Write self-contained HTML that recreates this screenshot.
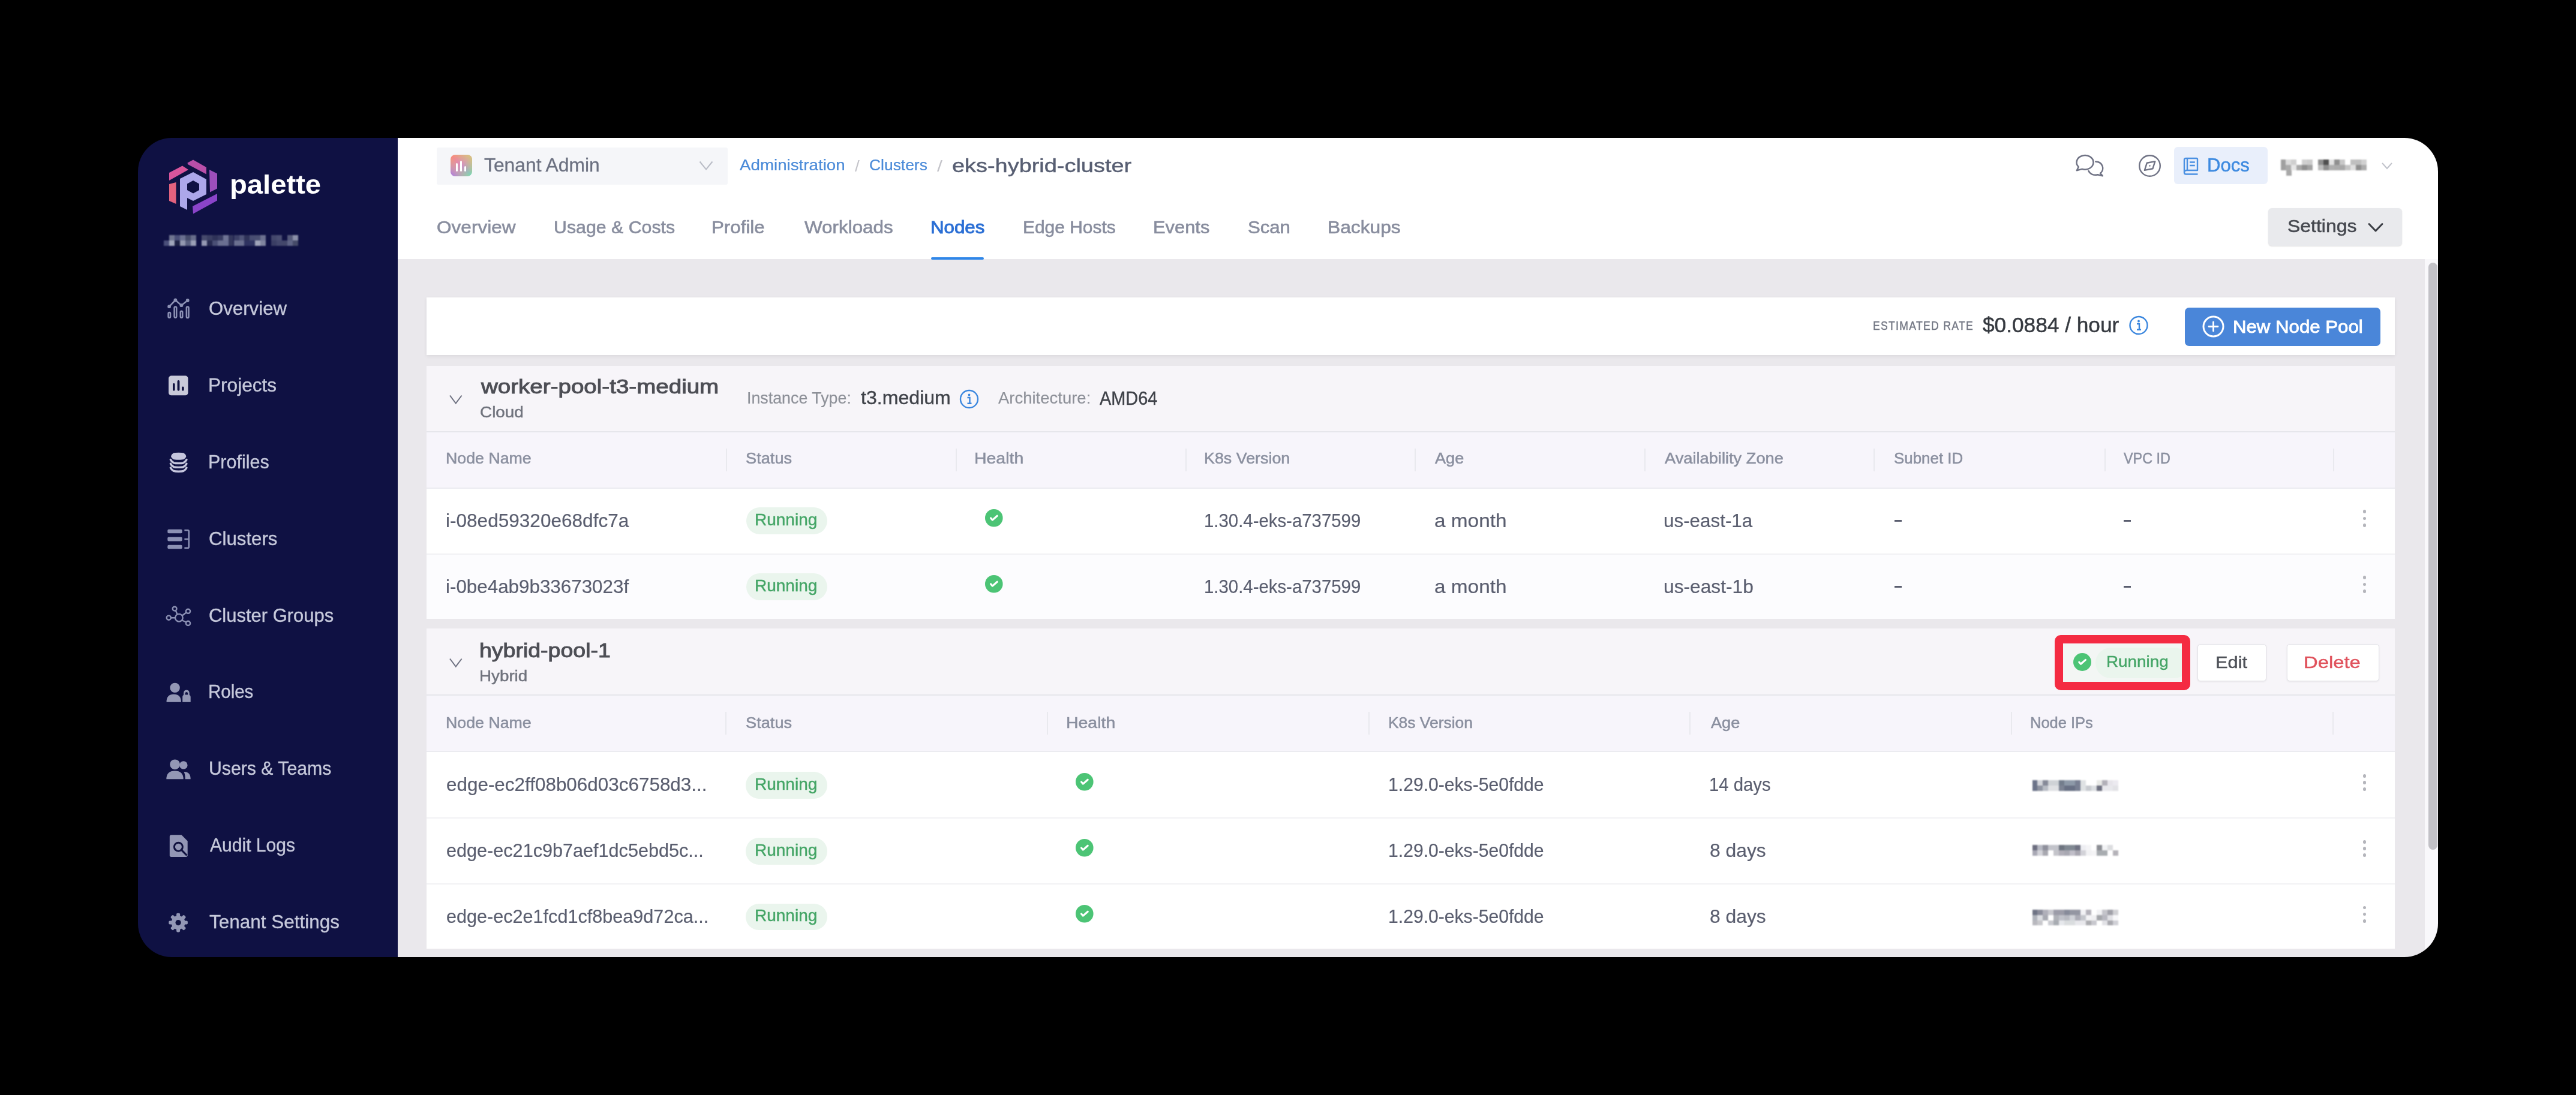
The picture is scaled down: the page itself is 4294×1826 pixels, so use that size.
<!DOCTYPE html>
<html><head><meta charset="utf-8"><style>
html,body{margin:0;padding:0;background:#000;width:4294px;height:1826px;overflow:hidden}
.win{position:absolute;left:230px;top:230px;width:3834px;height:1366px;border-radius:56px;overflow:hidden}
.in{position:absolute;left:-230px;top:-230px;width:4294px;height:1826px}
.in > div, .in > svg, .g > div{position:absolute}
.t{white-space:nowrap;line-height:1;font-family:"Liberation Sans",sans-serif;transform-origin:0 0}
</style></head><body>
<div class="win"><div class="in">
<div style="left:230px;top:230px;width:433px;height:1366px;background:#0f1143;"></div>
<div style="left:663px;top:230px;width:3401px;height:202px;background:#ffffff;"></div>
<div style="left:663px;top:432px;width:3379px;height:1164px;background:#eae8ec;"></div>
<div style="left:4042px;top:432px;width:22px;height:1164px;background:#f9f8fb;"></div>
<div style="left:4048px;top:438px;width:15px;height:979px;background:#c2c1c6;border-radius:8px"></div>
<svg style="left:270px;top:255px" width="100" height="110" viewBox="0 0 100 110">
<polygon fill="#d9559c" points="12,33 34,21.5 44,28 12,46"/>
<polygon fill="#b94fa9" points="42.5,16.5 52,11.5 74,24 74,35.5 43,19"/>
<polygon fill="#9d4fbb" points="79,28 92,34.5 92,59.5 80,65.5"/>
<polygon fill="#8a44c9" points="51,89 92,68 92,79.5 52,101.5"/>
<polygon fill="#e2627e" points="12,52 23.5,49 23.5,85 12,80"/>
<path fill="#aca7ea" fill-rule="evenodd" d="M30,43 L52,32 L74,44 L74,69 L52,80 L42,75 L42,95 L30,89 Z M52,46 L62,51.5 L62,62 L52,67.5 L42,62 L42,51.5 Z"/>
</svg>
<div class="g" style="left:0;top:0;width:4294px;height:1826px;filter:blur(0.9px)">
<div style="left:273.2px;top:401px;width:8.900000000000034px;height:9px;background:#4a4f7a;"></div>
<div style="left:282.1px;top:392px;width:9.0px;height:9px;background:#6f7590;"></div>
<div style="left:282.1px;top:401px;width:9.0px;height:9px;background:#a0a6bb;"></div>
<div style="left:291.1px;top:392px;width:8.899999999999977px;height:9px;background:#4a4f78;"></div>
<div style="left:291.1px;top:401px;width:8.899999999999977px;height:9px;background:#1e2245;"></div>
<div style="left:300.1px;top:392px;width:8.899999999999977px;height:9px;background:#6a7090;"></div>
<div style="left:300.1px;top:401px;width:8.899999999999977px;height:9px;background:#9398b0;"></div>
<div style="left:309.0px;top:392px;width:8.899999999999977px;height:9px;background:#454b6a;"></div>
<div style="left:309.0px;top:401px;width:8.899999999999977px;height:9px;background:#5a6080;"></div>
<div style="left:317.9px;top:392px;width:9.0px;height:9px;background:#676d8a;"></div>
<div style="left:317.9px;top:401px;width:9.0px;height:9px;background:#9a9fb5;"></div>
<div style="left:335.8px;top:392px;width:9.0px;height:9px;background:#464a6c;"></div>
<div style="left:335.8px;top:401px;width:9.0px;height:9px;background:#9498b2;"></div>
<div style="left:344.8px;top:392px;width:8.899999999999977px;height:9px;background:#3a3e62;"></div>
<div style="left:344.8px;top:401px;width:8.899999999999977px;height:9px;background:#262a50;"></div>
<div style="left:353.8px;top:392px;width:8.899999999999977px;height:9px;background:#2e3258;"></div>
<div style="left:353.8px;top:401px;width:8.899999999999977px;height:9px;background:#4a4f75;"></div>
<div style="left:362.7px;top:392px;width:8.900000000000034px;height:9px;background:#383c62;"></div>
<div style="left:362.7px;top:401px;width:8.900000000000034px;height:9px;background:#6a6f90;"></div>
<div style="left:371.6px;top:392px;width:9.0px;height:9px;background:#6e7394;"></div>
<div style="left:371.6px;top:401px;width:9.0px;height:9px;background:#6a6f92;"></div>
<div style="left:380.6px;top:392px;width:8.899999999999977px;height:9px;background:#33375c;"></div>
<div style="left:380.6px;top:401px;width:8.899999999999977px;height:9px;background:#33375c;"></div>
<div style="left:389.5px;top:392px;width:9.0px;height:9px;background:#3b3f66;"></div>
<div style="left:389.5px;top:401px;width:9.0px;height:9px;background:#6b7090;"></div>
<div style="left:398.5px;top:392px;width:8.899999999999977px;height:9px;background:#4f5478;"></div>
<div style="left:398.5px;top:401px;width:8.899999999999977px;height:9px;background:#6b7090;"></div>
<div style="left:407.4px;top:392px;width:9.0px;height:9px;background:#2e3258;"></div>
<div style="left:407.4px;top:401px;width:9.0px;height:9px;background:#2e3260;"></div>
<div style="left:416.4px;top:392px;width:8.900000000000034px;height:9px;background:#484d72;"></div>
<div style="left:416.4px;top:401px;width:8.900000000000034px;height:9px;background:#2f3462;"></div>
<div style="left:425.3px;top:392px;width:9.0px;height:9px;background:#4a4f72;"></div>
<div style="left:425.3px;top:401px;width:9.0px;height:9px;background:#a0a5ba;"></div>
<div style="left:434.3px;top:392px;width:8.899999999999977px;height:9px;background:#6c7190;"></div>
<div style="left:434.3px;top:401px;width:8.899999999999977px;height:9px;background:#80859f;"></div>
<div style="left:452.2px;top:392px;width:8.900000000000034px;height:9px;background:#43476c;"></div>
<div style="left:452.2px;top:401px;width:8.900000000000034px;height:9px;background:#3a3e64;"></div>
<div style="left:461.1px;top:392px;width:9.0px;height:9px;background:#4a4e72;"></div>
<div style="left:461.1px;top:401px;width:9.0px;height:9px;background:#43476c;"></div>
<div style="left:470.1px;top:401px;width:8.899999999999977px;height:9px;background:#43476a;"></div>
<div style="left:479.0px;top:392px;width:9.0px;height:9px;background:#555a7a;"></div>
<div style="left:479.0px;top:401px;width:9.0px;height:9px;background:#5f6485;"></div>
<div style="left:488.0px;top:392px;width:8.899999999999977px;height:9px;background:#8a8fa8;"></div>
<div style="left:488.0px;top:401px;width:8.899999999999977px;height:9px;background:#454a68;"></div>
</div>
<svg style="left:270px;top:490px" width="60" height="50" viewBox="0 0 60 50" fill="none" stroke="#8c91b4" stroke-width="2.6" stroke-linejoin="round" stroke-linecap="round">
<polyline points="12.1,21.2 22.4,10.5 32.4,19.2 42.7,11"/>
<circle cx="12.1" cy="21.2" r="1.6" fill="#8c91b4"/><circle cx="22.4" cy="10.5" r="1.6" fill="#8c91b4"/><circle cx="32.4" cy="19.2" r="1.6" fill="#8c91b4"/><circle cx="42.7" cy="11" r="1.6" fill="#8c91b4"/>
<rect x="10.6" y="31" width="3.4" height="8.6" rx="1.7"/><rect x="20.6" y="21.5" width="3.6" height="18.1" rx="1.8"/><rect x="30.8" y="28.8" width="3.4" height="10.8" rx="1.7"/><rect x="40.9" y="21.5" width="3.6" height="18.5" rx="1.8"/>
</svg>
<svg style="left:270px;top:615px" width="60" height="55" viewBox="0 0 60 55">
<rect x="11" y="11.6" width="32.5" height="32.6" rx="4.5" fill="#c9cad9"/>
<rect x="18" y="24" width="3.6" height="12.7" rx="1.8" fill="#10123f"/><rect x="25.6" y="19" width="3.8" height="17.7" rx="1.9" fill="#10123f"/><rect x="33" y="29.6" width="3.7" height="7.1" rx="1.8" fill="#10123f"/>
</svg>
<svg style="left:270px;top:745px" width="60" height="55" viewBox="0 0 60 55">
<path d="M15,15.8 Q15.5,13 19,10.6 Q21,9.8 27.6,9.8 Q34.2,9.8 36.4,10.6 Q40,13 40.4,15.8 Q40,18.6 36.4,20.9 Q34.2,21.7 27.6,21.7 Q21,21.7 19,20.9 Q15.5,18.6 15,15.8 Z" fill="#c5c6dd"/>
<path d="M14.3,21.5 Q16,25 19.5,26.8 Q22,27.6 27.6,27.6 Q33.4,27.6 35.8,26.8 Q39.3,25 41,21.5" fill="none" stroke="#c5c6dd" stroke-width="3.4" stroke-linecap="round"/>
<path d="M14.3,28.2 Q16,31.8 19.5,33.6 Q22,34.4 27.6,34.4 Q33.4,34.4 35.8,33.6 Q39.3,31.8 41,28.2" fill="none" stroke="#c5c6dd" stroke-width="3.4" stroke-linecap="round"/>
<path d="M14.3,35 Q16,38.6 19.5,40.4 Q22,41.2 27.6,41.2 Q33.4,41.2 35.8,40.4 Q39.3,38.6 41,35" fill="none" stroke="#c5c6dd" stroke-width="3.4" stroke-linecap="round"/>
</svg>
<svg style="left:270px;top:870px" width="60" height="55" viewBox="0 0 60 55">
<rect x="9.3" y="12.8" width="24.4" height="6.5" rx="2" fill="#8c91b4"/><rect x="9.3" y="25.6" width="24.4" height="6.8" rx="2" fill="#8c91b4"/><rect x="9.3" y="38.7" width="24.4" height="6.5" rx="2" fill="#8c91b4"/>
<path d="M37.4,14.2 L43,14.2 Q44.8,14.2 44.8,16 L44.8,42 Q44.8,43.8 43,43.8 L37.4,43.8 M37.4,29 L44.8,29" fill="none" stroke="#8c91b4" stroke-width="2.6"/>
</svg>
<svg style="left:270px;top:1000px" width="60" height="55" viewBox="0 0 60 55" fill="none" stroke="#8c91b4" stroke-width="2.4">
<circle cx="28.4" cy="30.2" r="6.3"/><circle cx="21.1" cy="15.1" r="3.4"/><circle cx="43.5" cy="19.3" r="3.6"/><circle cx="11.3" cy="30.2" r="3.6"/><circle cx="43.5" cy="39.4" r="3.6"/>
<path d="M23,18.5 L25.5,24.5 M40.3,21.5 L33.8,26.5 M14.9,30.2 L22.1,30.2 M33.5,34.5 L40.5,37.5"/>
</svg>
<svg style="left:270px;top:1125px" width="60" height="55" viewBox="0 0 60 55" fill="#9397b5">
<circle cx="21.6" cy="21.9" r="8.2"/>
<path d="M7.5,45.7 Q7.5,32.7 19.7,32.7 Q31.9,32.7 31.9,45.7 Z"/>
<path d="M34.2,45.7 L34.2,37 Q34.2,34.5 36,34 L36,32 Q36,25.6 40.9,25.6 Q45.8,25.6 45.8,32 L45.8,34 Q47.7,34.5 47.7,37 L47.7,45.7 Z M38.6,33.5 L43.2,33.5 L43.2,31.5 Q43.2,29 40.9,29 Q38.6,29 38.6,31.5 Z" fill-rule="evenodd"/>
</svg>
<svg style="left:270px;top:1255px" width="60" height="55" viewBox="0 0 60 55" fill="#9397b5">
<circle cx="21.6" cy="19.8" r="8.4"/><circle cx="35.9" cy="20.9" r="6.7"/>
<path d="M7.3,44.2 Q7.3,30.4 21.5,30.4 Q35.7,30.4 35.7,44.2 Z"/>
<path d="M37.5,44.2 L47.7,44.2 Q47.7,32 36.5,32 Q38.8,36 38.8,44.2 Z"/>
</svg>
<svg style="left:270px;top:1380px" width="60" height="55" viewBox="0 0 60 55">
<path d="M15.5,12.3 L32.5,12.3 L42.7,22.5 L42.7,46.3 Q42.7,49 40,49 L15.5,49 Q12.8,49 12.8,46.3 L12.8,15 Q12.8,12.3 15.5,12.3 Z" fill="#9397b5"/>
<circle cx="27.4" cy="32.2" r="7" fill="none" stroke="#10123f" stroke-width="3"/>
<path d="M32.5,37.3 L41.5,46.5" stroke="#10123f" stroke-width="3.2"/>
</svg>
<svg style="left:270px;top:1510px" width="60" height="55" viewBox="0 0 60 55">
<g transform="translate(27.1,28.6)" fill="#9397b5">
<circle r="11.5"/>
<rect x="-3" y="-15.8" width="6" height="7" rx="1.8" transform="rotate(0)"/><rect x="-3" y="-15.8" width="6" height="7" rx="1.8" transform="rotate(45)"/><rect x="-3" y="-15.8" width="6" height="7" rx="1.8" transform="rotate(90)"/><rect x="-3" y="-15.8" width="6" height="7" rx="1.8" transform="rotate(135)"/><rect x="-3" y="-15.8" width="6" height="7" rx="1.8" transform="rotate(180)"/><rect x="-3" y="-15.8" width="6" height="7" rx="1.8" transform="rotate(225)"/><rect x="-3" y="-15.8" width="6" height="7" rx="1.8" transform="rotate(270)"/><rect x="-3" y="-15.8" width="6" height="7" rx="1.8" transform="rotate(315)"/>
<circle r="4.6" fill="#10123f"/>
</g></svg>
<div style="left:728px;top:246px;width:485px;height:62px;background:#f5f6f9;border-radius:3px"></div>
<svg style="left:751px;top:258px" width="37" height="37" viewBox="0 0 37 37">
<defs><linearGradient id="g1" x1="0" y1="0" x2="1" y2="1"><stop offset="0" stop-color="#ff8a72"/><stop offset="0.5" stop-color="#d58cc8"/><stop offset="1" stop-color="#6fe0b0"/></linearGradient>
<linearGradient id="g2" x1="1" y1="0" x2="0" y2="1"><stop offset="0" stop-color="#d9d36a" stop-opacity="0.9"/><stop offset="0.5" stop-color="#d9d36a" stop-opacity="0"/><stop offset="1" stop-color="#a070f0" stop-opacity="0.9"/></linearGradient></defs>
<rect x="0" y="0" width="36" height="36" rx="8" fill="url(#g1)"/><rect x="0" y="0" width="36" height="36" rx="8" fill="url(#g2)"/>
<rect x="9" y="14" width="3" height="14" rx="1.5" fill="#fff"/><rect x="16" y="10" width="3" height="18" rx="1.5" fill="#fff"/><rect x="23" y="19" width="3" height="9" rx="1.5" fill="#fff"/>
</svg>
<svg style="left:1164px;top:266px" width="26" height="20" viewBox="0 0 26 20"><polyline points="2.5,3.5 13,16.5 23.5,3.5" fill="none" stroke="#b9bcc6" stroke-width="2"/></svg>
<svg style="left:3450px;top:245px" width="70" height="60" viewBox="0 0 70 60" fill="none" stroke="#6f7284" stroke-width="2.5" stroke-linejoin="round" stroke-linecap="round">
<path d="M20.7,36.9 A14 11.8 0 1 0 14.8,33.4 L11.8,39.2 Z"/>
<path d="M43.3,24.6 A12 11 0 0 1 51,44 L54.8,48.2 L46.4,46.2 A12 11 0 0 1 31.5,40"/>
</svg>
<svg style="left:3555px;top:245px" width="60" height="60" viewBox="0 0 60 60" fill="none" stroke="#6f7284" stroke-width="2.4" stroke-linejoin="round">
<circle cx="28.5" cy="31.5" r="17.3"/>
<path d="M37.3,24.1 L33.4,36.3 L19.9,38.9 L23.8,26.7 Z"/>
<circle cx="28.5" cy="31.5" r="1.2" fill="#6f7284" stroke="none"/>
</svg>
<div style="left:3624px;top:245px;width:156px;height:62px;background:#e9effb;border-radius:6px"></div>
<svg style="left:3630px;top:255px" width="45" height="45" viewBox="0 0 45 45" fill="none" stroke="#4a90e2" stroke-width="2.4" stroke-linejoin="round">
<path d="M11,33 L11,11.5 Q11,9 13.5,9 L31.5,9 Q33,9 33,10.5 L33,29 L15,29 Q11,29 11,33 Q11,35.5 14,35.5 L33.5,35.5"/>
<path d="M16,9.5 L16,28.5"/>
<path d="M20,15.5 L28.8,15.5 M20,21 L28.8,21"/>
</svg>
<div class="g" style="left:0;top:0;width:4294px;height:1826px;filter:blur(0.9px)">
<div style="left:3801.5px;top:266px;width:8.900000000000091px;height:9px;background:#a0a0a0;"></div>
<div style="left:3801.5px;top:275px;width:8.900000000000091px;height:9px;background:#a0a0a0;"></div>
<div style="left:3810.4px;top:266px;width:9.0px;height:9px;background:#dcdcdc;"></div>
<div style="left:3810.4px;top:275px;width:9.0px;height:9px;background:#ababab;"></div>
<div style="left:3819.4px;top:266px;width:8.900000000000091px;height:9px;background:#cfcfcf;"></div>
<div style="left:3819.4px;top:275px;width:8.900000000000091px;height:9px;background:#e6e6e6;"></div>
<div style="left:3828.3px;top:275px;width:9.0px;height:9px;background:#a8a8a8;"></div>
<div style="left:3837.3px;top:266px;width:8.899999999999636px;height:9px;background:#d0d0d0;"></div>
<div style="left:3837.3px;top:275px;width:8.899999999999636px;height:9px;background:#8f8f8f;"></div>
<div style="left:3846.2px;top:266px;width:9.0px;height:9px;background:#cccccc;"></div>
<div style="left:3846.2px;top:275px;width:9.0px;height:9px;background:#a2a2a2;"></div>
<div style="left:3864.2px;top:266px;width:8.900000000000091px;height:9px;background:#8e8e8e;"></div>
<div style="left:3864.2px;top:275px;width:8.900000000000091px;height:9px;background:#bdbdbd;"></div>
<div style="left:3873.1px;top:266px;width:8.900000000000091px;height:9px;background:#4f4f4f;"></div>
<div style="left:3873.1px;top:275px;width:8.900000000000091px;height:9px;background:#8e8e8e;"></div>
<div style="left:3882.1px;top:266px;width:8.900000000000091px;height:9px;background:#e2e2e2;"></div>
<div style="left:3882.1px;top:275px;width:8.900000000000091px;height:9px;background:#aeaeae;"></div>
<div style="left:3891.0px;top:266px;width:8.900000000000091px;height:9px;background:#8f8f8f;"></div>
<div style="left:3891.0px;top:275px;width:8.900000000000091px;height:9px;background:#ababab;"></div>
<div style="left:3899.9px;top:266px;width:9.0px;height:9px;background:#c8c8c8;"></div>
<div style="left:3899.9px;top:275px;width:9.0px;height:9px;background:#a8a8a8;"></div>
<div style="left:3908.9px;top:275px;width:8.900000000000091px;height:9px;background:#c4c4c4;"></div>
<div style="left:3917.8px;top:266px;width:9.0px;height:9px;background:#c0c0c0;"></div>
<div style="left:3917.8px;top:275px;width:9.0px;height:9px;background:#e0e0e0;"></div>
<div style="left:3926.8px;top:266px;width:9.0px;height:9px;background:#bfbfbf;"></div>
<div style="left:3926.8px;top:275px;width:9.0px;height:9px;background:#8f8f8f;"></div>
<div style="left:3935.8px;top:266px;width:8.899999999999636px;height:9px;background:#d0d0d0;"></div>
<div style="left:3935.8px;top:275px;width:8.899999999999636px;height:9px;background:#acacac;"></div>
<div style="left:3810.5px;top:284px;width:9.0px;height:9px;background:#a8a8a8;"></div>
</div>
<svg style="left:3968px;top:268px" width="22" height="18" viewBox="0 0 22 18"><polyline points="3,4 11,13 19,4" fill="none" stroke="#c0c2ca" stroke-width="2"/></svg>
<div style="left:1551.5px;top:429px;width:88.09999999999991px;height:4px;background:#2f86e8;border-radius:2px"></div>
<div style="left:3781px;top:347px;width:223px;height:63px;background:#e9eaed;border-radius:6px;box-shadow:0 1px 2px rgba(0,0,0,0.12)"></div>
<svg style="left:3944px;top:368px" width="32" height="24" viewBox="0 0 32 24"><polyline points="5,5.5 16,17 27,5.5" fill="none" stroke="#3a3d44" stroke-width="3" stroke-linecap="round" stroke-linejoin="round"/></svg>
<div style="left:711px;top:496px;width:3281px;height:95.5px;background:#ffffff;box-shadow:0 2px 6px rgba(0,0,0,0.07)"></div>
<svg style="left:3545px;top:523px" width="40" height="40" viewBox="0 0 40 40"><circle cx="20" cy="19.5" r="14.5" fill="none" stroke="#3a86de" stroke-width="2.4"/>
<circle cx="20" cy="12.5" r="1.9" fill="#3a86de"/><path d="M17,17 L21,17 L21,26.5 M17,26.8 L24,26.8" fill="none" stroke="#3a86de" stroke-width="2.4"/></svg>
<div style="left:3641.6px;top:512.7px;width:326.0px;height:63.89999999999998px;background:#4a86d9;border-radius:7px"></div>
<svg style="left:3665px;top:520px" width="50" height="50" viewBox="0 0 50 50"><circle cx="24.5" cy="24.5" r="16.5" fill="none" stroke="#fff" stroke-width="3"/>
<path d="M24.5,17 L24.5,32 M17,24.5 L32,24.5" stroke="#fff" stroke-width="2.8" stroke-linecap="round"/></svg>
<div style="left:711px;top:610px;width:3281px;height:422px;background:#ffffff;"></div>
<div style="left:711px;top:610px;width:3281px;height:109px;background:#f7f5f9;"></div>
<div style="left:711px;top:719px;width:3281px;height:2px;background:#e6e6eb;"></div>
<div style="left:711px;top:721px;width:3281px;height:93px;background:#f7f5fb;"></div>
<div style="left:711px;top:813px;width:3281px;height:2px;background:#ebebf0;"></div>
<div style="left:711px;top:925px;width:3281px;height:107px;background:#fcfcfe;"></div>
<div style="left:711px;top:923px;width:3281px;height:2px;background:#f1f1f4;"></div>
<div style="left:1209.5px;top:748px;width:2.0px;height:38px;background:#e9e9ee;"></div>
<div style="left:1592.5px;top:748px;width:2.0px;height:38px;background:#e9e9ee;"></div>
<div style="left:1975.5px;top:748px;width:2.0px;height:38px;background:#e9e9ee;"></div>
<div style="left:2357.5px;top:748px;width:2.0px;height:38px;background:#e9e9ee;"></div>
<div style="left:2740.5px;top:748px;width:2.0px;height:38px;background:#e9e9ee;"></div>
<div style="left:3122.5px;top:748px;width:2.0px;height:38px;background:#e9e9ee;"></div>
<div style="left:3507.5px;top:748px;width:2.0px;height:38px;background:#e9e9ee;"></div>
<div style="left:3888.5px;top:748px;width:2.0px;height:38px;background:#e9e9ee;"></div>
<svg style="left:745px;top:650px" width="30" height="30" viewBox="0 0 30 30"><polyline points="5,9.5 14.8,22.5 24.6,9.5" fill="none" stroke="#6d7080" stroke-width="2"/></svg>
<svg style="left:1596px;top:646px" width="40" height="40" viewBox="0 0 40 40"><circle cx="19.5" cy="19.5" r="14.5" fill="none" stroke="#3a86de" stroke-width="2.4"/>
<circle cx="19.5" cy="12.5" r="1.9" fill="#3a86de"/><path d="M16.5,17 L20.5,17 L20.5,26.5 M16.5,26.8 L23.5,26.8" fill="none" stroke="#3a86de" stroke-width="2.4"/></svg>
<div style="left:1243.6px;top:846px;width:135.10000000000014px;height:45px;background:#eaf5ed;border-radius:22.5px"></div>
<svg style="left:1640.6000000000001px;top:848.2px" width="31.6" height="31.6" viewBox="-15.8 -15.8 31.6 31.6"><circle r="14.8" fill="#4cc475"/>
<polyline points="-5.2,0.2 -2.4,3.3 5.4,-3.6" fill="none" stroke="#fff" stroke-width="3.2" stroke-linecap="round" stroke-linejoin="round"/></svg>
<div style="left:3158px;top:867px;width:12px;height:2.5px;background:#5a5e6f;"></div>
<div style="left:3540px;top:867px;width:12px;height:2.5px;background:#5a5e6f;"></div>
<div style="left:3938.5px;top:850.4px;width:5.800000000000182px;height:5.7999999999999545px;background:#b5b6bc;border-radius:50%"></div>
<div style="left:3938.5px;top:861.6px;width:5.800000000000182px;height:5.7999999999999545px;background:#b5b6bc;border-radius:50%"></div>
<div style="left:3938.5px;top:872.8000000000001px;width:5.800000000000182px;height:5.7999999999999545px;background:#b5b6bc;border-radius:50%"></div>
<div style="left:1243.6px;top:956px;width:135.10000000000014px;height:45px;background:#eaf5ed;border-radius:22.5px"></div>
<svg style="left:1640.6000000000001px;top:958.2px" width="31.6" height="31.6" viewBox="-15.8 -15.8 31.6 31.6"><circle r="14.8" fill="#4cc475"/>
<polyline points="-5.2,0.2 -2.4,3.3 5.4,-3.6" fill="none" stroke="#fff" stroke-width="3.2" stroke-linecap="round" stroke-linejoin="round"/></svg>
<div style="left:3158px;top:977px;width:12px;height:2.5px;background:#5a5e6f;"></div>
<div style="left:3540px;top:977px;width:12px;height:2.5px;background:#5a5e6f;"></div>
<div style="left:3938.5px;top:960.4px;width:5.800000000000182px;height:5.7999999999999545px;background:#b5b6bc;border-radius:50%"></div>
<div style="left:3938.5px;top:971.6px;width:5.800000000000182px;height:5.7999999999999545px;background:#b5b6bc;border-radius:50%"></div>
<div style="left:3938.5px;top:982.8000000000001px;width:5.800000000000182px;height:5.7999999999999545px;background:#b5b6bc;border-radius:50%"></div>
<div style="left:711px;top:1048px;width:3281px;height:534px;background:#ffffff;"></div>
<div style="left:711px;top:1048px;width:3281px;height:110px;background:#f7f5f9;"></div>
<div style="left:711px;top:1158px;width:3281px;height:2px;background:#e6e6eb;"></div>
<div style="left:711px;top:1160px;width:3281px;height:93px;background:#f7f5fb;"></div>
<div style="left:711px;top:1252px;width:3281px;height:2px;background:#ebebf0;"></div>
<div style="left:1209.0px;top:1187px;width:2.0px;height:38px;background:#e9e9ee;"></div>
<div style="left:1745.2px;top:1187px;width:2.0px;height:38px;background:#e9e9ee;"></div>
<div style="left:2280.5px;top:1187px;width:2.0px;height:38px;background:#e9e9ee;"></div>
<div style="left:2816.0px;top:1187px;width:2.0px;height:38px;background:#e9e9ee;"></div>
<div style="left:3352.3px;top:1187px;width:2.0px;height:38px;background:#e9e9ee;"></div>
<div style="left:3888.1px;top:1187px;width:2.0px;height:38px;background:#e9e9ee;"></div>
<svg style="left:745px;top:1089px" width="30" height="30" viewBox="0 0 30 30"><polyline points="5,9.5 14.8,22.5 24.6,9.5" fill="none" stroke="#6d7080" stroke-width="2"/></svg>
<div style="left:3439px;top:1074px;width:198px;height:63px;background:#f3f6f4;"></div>
<div style="left:3493px;top:1080px;width:157px;height:51px;background:#eaf5ed;border-radius:26px"></div>
<div style="left:3424.5px;top:1059px;width:226.5px;height:92.3px;box-sizing:border-box;border:14.7px solid #f42b42;border-radius:10px"></div>
<svg style="left:3454.5px;top:1088px" width="32" height="32" viewBox="-16 -16 32 32"><circle r="15" fill="#4cc475"/>
<polyline points="-5.2,0.2 -2.4,3.3 5.4,-3.6" fill="none" stroke="#fff" stroke-width="3.2" stroke-linecap="round" stroke-linejoin="round"/></svg>
<div style="left:3663px;top:1074px;width:115px;height:61.5px;background:#ffffff;border:1.5px solid #e3e3e8;border-radius:5px;box-sizing:border-box;box-shadow:0 1px 3px rgba(0,0,0,0.08)"></div>
<div style="left:3812.3px;top:1074px;width:153.69999999999982px;height:61.5px;background:#ffffff;border:1.5px solid #e3e3e8;border-radius:5px;box-sizing:border-box;box-shadow:0 1px 3px rgba(0,0,0,0.08)"></div>
<div style="left:1243.4px;top:1287px;width:136.0999999999999px;height:44.5px;background:#eaf5ed;border-radius:22.25px"></div>
<svg style="left:1792.2px;top:1288.2px" width="31.6" height="31.6" viewBox="-15.8 -15.8 31.6 31.6"><circle r="14.8" fill="#4cc475"/>
<polyline points="-5.2,0.2 -2.4,3.3 5.4,-3.6" fill="none" stroke="#fff" stroke-width="3.2" stroke-linecap="round" stroke-linejoin="round"/></svg>
<div style="left:3938.5px;top:1290.8999999999999px;width:5.800000000000182px;height:5.800000000000182px;background:#b5b6bc;border-radius:50%"></div>
<div style="left:3938.5px;top:1302.1px;width:5.800000000000182px;height:5.800000000000182px;background:#b5b6bc;border-radius:50%"></div>
<div style="left:3938.5px;top:1313.3px;width:5.800000000000182px;height:5.800000000000182px;background:#b5b6bc;border-radius:50%"></div>
<div style="left:711px;top:1363px;width:3281px;height:2px;background:#f1f1f4;"></div>
<div style="left:1243.4px;top:1397px;width:136.0999999999999px;height:44.5px;background:#eaf5ed;border-radius:22.25px"></div>
<svg style="left:1792.2px;top:1398.2px" width="31.6" height="31.6" viewBox="-15.8 -15.8 31.6 31.6"><circle r="14.8" fill="#4cc475"/>
<polyline points="-5.2,0.2 -2.4,3.3 5.4,-3.6" fill="none" stroke="#fff" stroke-width="3.2" stroke-linecap="round" stroke-linejoin="round"/></svg>
<div style="left:3938.5px;top:1400.8999999999999px;width:5.800000000000182px;height:5.800000000000182px;background:#b5b6bc;border-radius:50%"></div>
<div style="left:3938.5px;top:1412.1px;width:5.800000000000182px;height:5.800000000000182px;background:#b5b6bc;border-radius:50%"></div>
<div style="left:3938.5px;top:1423.3px;width:5.800000000000182px;height:5.800000000000182px;background:#b5b6bc;border-radius:50%"></div>
<div style="left:711px;top:1472.6px;width:3281px;height:2.0px;background:#f1f1f4;"></div>
<div style="left:1243.4px;top:1506.6px;width:136.0999999999999px;height:44.5px;background:#eaf5ed;border-radius:22.25px"></div>
<svg style="left:1792.2px;top:1507.8px" width="31.6" height="31.6" viewBox="-15.8 -15.8 31.6 31.6"><circle r="14.8" fill="#4cc475"/>
<polyline points="-5.2,0.2 -2.4,3.3 5.4,-3.6" fill="none" stroke="#fff" stroke-width="3.2" stroke-linecap="round" stroke-linejoin="round"/></svg>
<div style="left:3938.5px;top:1510.4999999999998px;width:5.800000000000182px;height:5.800000000000182px;background:#b5b6bc;border-radius:50%"></div>
<div style="left:3938.5px;top:1521.6999999999998px;width:5.800000000000182px;height:5.800000000000182px;background:#b5b6bc;border-radius:50%"></div>
<div style="left:3938.5px;top:1532.8999999999999px;width:5.800000000000182px;height:5.800000000000182px;background:#b5b6bc;border-radius:50%"></div>
<div class="g" style="left:0;top:0;width:4294px;height:1826px;filter:blur(0.9px)">
<div style="left:3387.5px;top:1301.0px;width:8.900000000000091px;height:8.799999999999955px;background:#6b7388;"></div>
<div style="left:3396.4px;top:1301.0px;width:9.0px;height:8.799999999999955px;background:#d3d5da;"></div>
<div style="left:3405.4px;top:1301.0px;width:8.900000000000091px;height:8.799999999999955px;background:#868a98;"></div>
<div style="left:3414.3px;top:1301.0px;width:9.0px;height:8.799999999999955px;background:#cfd2d6;"></div>
<div style="left:3423.3px;top:1301.0px;width:8.899999999999636px;height:8.799999999999955px;background:#cfd2d6;"></div>
<div style="left:3432.2px;top:1301.0px;width:9.0px;height:8.799999999999955px;background:#737d8c;"></div>
<div style="left:3441.2px;top:1301.0px;width:8.900000000000091px;height:8.799999999999955px;background:#8d99a8;"></div>
<div style="left:3450.2px;top:1301.0px;width:8.900000000000091px;height:8.799999999999955px;background:#8d99a8;"></div>
<div style="left:3459.1px;top:1301.0px;width:8.900000000000091px;height:8.799999999999955px;background:#787f92;"></div>
<div style="left:3468.1px;top:1301.0px;width:8.900000000000091px;height:8.799999999999955px;background:#dfe2e4;"></div>
<div style="left:3494.9px;top:1301.0px;width:8.900000000000091px;height:8.799999999999955px;background:#e8e9e6;"></div>
<div style="left:3503.8px;top:1301.0px;width:9.0px;height:8.799999999999955px;background:#b2b0b8;"></div>
<div style="left:3512.8px;top:1301.0px;width:9.0px;height:8.799999999999955px;background:#e6e4ea;"></div>
<div style="left:3521.8px;top:1301.0px;width:8.899999999999636px;height:8.799999999999955px;background:#eceaf0;"></div>
<div style="left:3387.5px;top:1309.8px;width:8.900000000000091px;height:8.799999999999955px;background:#6b7388;"></div>
<div style="left:3396.4px;top:1309.8px;width:9.0px;height:8.799999999999955px;background:#8e93a0;"></div>
<div style="left:3405.4px;top:1309.8px;width:8.900000000000091px;height:8.799999999999955px;background:#b8bcc4;"></div>
<div style="left:3414.3px;top:1309.8px;width:9.0px;height:8.799999999999955px;background:#e0e1e4;"></div>
<div style="left:3423.3px;top:1309.8px;width:8.899999999999636px;height:8.799999999999955px;background:#e0e1e4;"></div>
<div style="left:3432.2px;top:1309.8px;width:9.0px;height:8.799999999999955px;background:#7d8494;"></div>
<div style="left:3441.2px;top:1309.8px;width:8.900000000000091px;height:8.799999999999955px;background:#687084;"></div>
<div style="left:3450.2px;top:1309.8px;width:8.900000000000091px;height:8.799999999999955px;background:#687084;"></div>
<div style="left:3459.1px;top:1309.8px;width:8.900000000000091px;height:8.799999999999955px;background:#787f92;"></div>
<div style="left:3468.1px;top:1309.8px;width:8.900000000000091px;height:8.799999999999955px;background:#dfe2e4;"></div>
<div style="left:3477.0px;top:1309.8px;width:8.900000000000091px;height:8.799999999999955px;background:#c8cbd0;"></div>
<div style="left:3485.9px;top:1309.8px;width:9.0px;height:8.799999999999955px;background:#dcdfe2;"></div>
<div style="left:3494.9px;top:1309.8px;width:8.900000000000091px;height:8.799999999999955px;background:#6e7080;"></div>
<div style="left:3503.8px;top:1309.8px;width:9.0px;height:8.799999999999955px;background:#e8e8ec;"></div>
<div style="left:3512.8px;top:1309.8px;width:9.0px;height:8.799999999999955px;background:#e8e8ec;"></div>
<div style="left:3521.8px;top:1309.8px;width:8.899999999999636px;height:8.799999999999955px;background:#e2e2e6;"></div>
<div style="left:3387.5px;top:1409.3px;width:8.900000000000091px;height:8.799999999999955px;background:#6c6e80;"></div>
<div style="left:3396.4px;top:1409.3px;width:9.0px;height:8.799999999999955px;background:#b6b8c2;"></div>
<div style="left:3405.4px;top:1409.3px;width:8.900000000000091px;height:8.799999999999955px;background:#8f909c;"></div>
<div style="left:3414.3px;top:1409.3px;width:9.0px;height:8.799999999999955px;background:#c2c3ca;"></div>
<div style="left:3423.3px;top:1409.3px;width:8.899999999999636px;height:8.799999999999955px;background:#c2c3ca;"></div>
<div style="left:3432.2px;top:1409.3px;width:9.0px;height:8.799999999999955px;background:#6e7480;"></div>
<div style="left:3441.2px;top:1409.3px;width:8.900000000000091px;height:8.799999999999955px;background:#808892;"></div>
<div style="left:3450.2px;top:1409.3px;width:8.900000000000091px;height:8.799999999999955px;background:#808892;"></div>
<div style="left:3459.1px;top:1409.3px;width:8.900000000000091px;height:8.799999999999955px;background:#6f7282;"></div>
<div style="left:3468.1px;top:1409.3px;width:8.900000000000091px;height:8.799999999999955px;background:#eeeef2;"></div>
<div style="left:3477.0px;top:1409.3px;width:8.900000000000091px;height:8.799999999999955px;background:#f4f4f6;"></div>
<div style="left:3494.9px;top:1409.3px;width:8.900000000000091px;height:8.799999999999955px;background:#8c8e94;"></div>
<div style="left:3503.8px;top:1409.3px;width:9.0px;height:8.799999999999955px;background:#f2f3f5;"></div>
<div style="left:3512.8px;top:1409.3px;width:9.0px;height:8.799999999999955px;background:#dcdde0;"></div>
<div style="left:3387.5px;top:1418.1px;width:8.900000000000091px;height:8.800000000000182px;background:#a8a8b4;"></div>
<div style="left:3396.4px;top:1418.1px;width:9.0px;height:8.800000000000182px;background:#d4d4da;"></div>
<div style="left:3405.4px;top:1418.1px;width:8.900000000000091px;height:8.800000000000182px;background:#a8a8b0;"></div>
<div style="left:3423.3px;top:1418.1px;width:8.899999999999636px;height:8.800000000000182px;background:#c4c4ca;"></div>
<div style="left:3432.2px;top:1418.1px;width:9.0px;height:8.800000000000182px;background:#b0aeb8;"></div>
<div style="left:3441.2px;top:1418.1px;width:8.900000000000091px;height:8.800000000000182px;background:#a8a8b2;"></div>
<div style="left:3450.2px;top:1418.1px;width:8.900000000000091px;height:8.800000000000182px;background:#c0bec8;"></div>
<div style="left:3459.1px;top:1418.1px;width:8.900000000000091px;height:8.800000000000182px;background:#a8a6b0;"></div>
<div style="left:3468.1px;top:1418.1px;width:8.900000000000091px;height:8.800000000000182px;background:#d2d2d8;"></div>
<div style="left:3477.0px;top:1418.1px;width:8.900000000000091px;height:8.800000000000182px;background:#f2f2f4;"></div>
<div style="left:3485.9px;top:1418.1px;width:9.0px;height:8.800000000000182px;background:#f4f4f6;"></div>
<div style="left:3494.9px;top:1418.1px;width:8.900000000000091px;height:8.800000000000182px;background:#a8acb0;"></div>
<div style="left:3503.8px;top:1418.1px;width:9.0px;height:8.800000000000182px;background:#a8acb0;"></div>
<div style="left:3521.8px;top:1418.1px;width:8.899999999999636px;height:8.800000000000182px;background:#b4b2b8;"></div>
<div style="left:3387.5px;top:1517.1px;width:8.900000000000091px;height:8.800000000000182px;background:#6e7384;"></div>
<div style="left:3396.4px;top:1517.1px;width:9.0px;height:8.800000000000182px;background:#8a8c9a;"></div>
<div style="left:3405.4px;top:1517.1px;width:8.900000000000091px;height:8.800000000000182px;background:#b0b0ba;"></div>
<div style="left:3414.3px;top:1517.1px;width:9.0px;height:8.800000000000182px;background:#c8c8ce;"></div>
<div style="left:3423.3px;top:1517.1px;width:8.899999999999636px;height:8.800000000000182px;background:#9c9ca8;"></div>
<div style="left:3432.2px;top:1517.1px;width:9.0px;height:8.800000000000182px;background:#9c9ca8;"></div>
<div style="left:3441.2px;top:1517.1px;width:8.900000000000091px;height:8.800000000000182px;background:#878b9a;"></div>
<div style="left:3450.2px;top:1517.1px;width:8.900000000000091px;height:8.800000000000182px;background:#9496a2;"></div>
<div style="left:3459.1px;top:1517.1px;width:8.900000000000091px;height:8.800000000000182px;background:#9496a2;"></div>
<div style="left:3468.1px;top:1517.1px;width:8.900000000000091px;height:8.800000000000182px;background:#f2f2f5;"></div>
<div style="left:3477.0px;top:1517.1px;width:8.900000000000091px;height:8.800000000000182px;background:#b4b2ba;"></div>
<div style="left:3494.9px;top:1517.1px;width:8.900000000000091px;height:8.800000000000182px;background:#f2f2f4;"></div>
<div style="left:3503.8px;top:1517.1px;width:9.0px;height:8.800000000000182px;background:#c4c4ca;"></div>
<div style="left:3512.8px;top:1517.1px;width:9.0px;height:8.800000000000182px;background:#a0a0a8;"></div>
<div style="left:3521.8px;top:1517.1px;width:8.899999999999636px;height:8.800000000000182px;background:#d0d0d4;"></div>
<div style="left:3387.5px;top:1525.9px;width:8.900000000000091px;height:8.799999999999955px;background:#b0b4bc;"></div>
<div style="left:3396.4px;top:1525.9px;width:9.0px;height:8.799999999999955px;background:#dcdee2;"></div>
<div style="left:3405.4px;top:1525.9px;width:8.900000000000091px;height:8.799999999999955px;background:#a8aab2;"></div>
<div style="left:3423.3px;top:1525.9px;width:8.899999999999636px;height:8.799999999999955px;background:#b0b2b8;"></div>
<div style="left:3432.2px;top:1525.9px;width:9.0px;height:8.799999999999955px;background:#c0c2ca;"></div>
<div style="left:3441.2px;top:1525.9px;width:8.900000000000091px;height:8.799999999999955px;background:#b8bac2;"></div>
<div style="left:3450.2px;top:1525.9px;width:8.900000000000091px;height:8.799999999999955px;background:#d0d2d8;"></div>
<div style="left:3459.1px;top:1525.9px;width:8.900000000000091px;height:8.799999999999955px;background:#acacb6;"></div>
<div style="left:3468.1px;top:1525.9px;width:8.900000000000091px;height:8.799999999999955px;background:#c4c6cc;"></div>
<div style="left:3477.0px;top:1525.9px;width:8.900000000000091px;height:8.799999999999955px;background:#f4f4f6;"></div>
<div style="left:3485.9px;top:1525.9px;width:9.0px;height:8.799999999999955px;background:#f0f0f2;"></div>
<div style="left:3494.9px;top:1525.9px;width:8.900000000000091px;height:8.799999999999955px;background:#a4a6aa;"></div>
<div style="left:3503.8px;top:1525.9px;width:9.0px;height:8.799999999999955px;background:#b8b8c0;"></div>
<div style="left:3512.8px;top:1525.9px;width:9.0px;height:8.799999999999955px;background:#e2e2e6;"></div>
<div style="left:3521.8px;top:1525.9px;width:8.899999999999636px;height:8.799999999999955px;background:#f8f8fa;"></div>
<div style="left:3387.5px;top:1534.7px;width:8.900000000000091px;height:8.799999999999955px;background:#b8b8be;"></div>
<div style="left:3396.4px;top:1534.7px;width:9.0px;height:8.799999999999955px;background:#c8c8cc;"></div>
<div style="left:3414.3px;top:1534.7px;width:9.0px;height:8.799999999999955px;background:#cacbd0;"></div>
<div style="left:3423.3px;top:1534.7px;width:8.899999999999636px;height:8.799999999999955px;background:#a8acb2;"></div>
<div style="left:3432.2px;top:1534.7px;width:9.0px;height:8.799999999999955px;background:#e6e8ec;"></div>
<div style="left:3441.2px;top:1534.7px;width:8.900000000000091px;height:8.799999999999955px;background:#dadddf;"></div>
<div style="left:3450.2px;top:1534.7px;width:8.900000000000091px;height:8.799999999999955px;background:#dadddf;"></div>
<div style="left:3459.1px;top:1534.7px;width:8.900000000000091px;height:8.799999999999955px;background:#e8e8ec;"></div>
<div style="left:3468.1px;top:1534.7px;width:8.900000000000091px;height:8.799999999999955px;background:#e8e8ec;"></div>
<div style="left:3477.0px;top:1534.7px;width:8.900000000000091px;height:8.799999999999955px;background:#acacb0;"></div>
<div style="left:3485.9px;top:1534.7px;width:9.0px;height:8.799999999999955px;background:#c8c8ce;"></div>
<div style="left:3503.8px;top:1534.7px;width:9.0px;height:8.799999999999955px;background:#e2e2e6;"></div>
<div style="left:3512.8px;top:1534.7px;width:9.0px;height:8.799999999999955px;background:#a8a8ae;"></div>
<div style="left:3521.8px;top:1534.7px;width:8.899999999999636px;height:8.799999999999955px;background:#d0d0d6;"></div>
</div>
<div class="t" style="left:383.05px;top:285.78px;font-size:44.5px;color:#ffffff;font-weight:700;transform:scaleX(1.0606);">palette</div>
<div class="t" style="left:348.32px;top:498.88px;font-size:30.5px;color:#c6c9db;font-weight:400;transform:scaleX(1.0229);-webkit-text-stroke:0.35px #c6c9db;">Overview</div>
<div class="t" style="left:347.31px;top:626.88px;font-size:30.5px;color:#c6c9db;font-weight:400;transform:scaleX(1.0356);-webkit-text-stroke:0.35px #c6c9db;">Projects</div>
<div class="t" style="left:347.39px;top:754.88px;font-size:30.5px;color:#c6c9db;font-weight:400;transform:scaleX(0.9998);-webkit-text-stroke:0.35px #c6c9db;">Profiles</div>
<div class="t" style="left:348.32px;top:882.88px;font-size:30.5px;color:#c6c9db;font-weight:400;transform:scaleX(1.0234);-webkit-text-stroke:0.35px #c6c9db;">Clusters</div>
<div class="t" style="left:348.33px;top:1010.88px;font-size:30.5px;color:#c6c9db;font-weight:400;transform:scaleX(1.0149);-webkit-text-stroke:0.35px #c6c9db;">Cluster Groups</div>
<div class="t" style="left:347.47px;top:1138.38px;font-size:30.5px;color:#c6c9db;font-weight:400;transform:scaleX(0.9654);-webkit-text-stroke:0.35px #c6c9db;">Roles</div>
<div class="t" style="left:347.88px;top:1266.38px;font-size:30.5px;color:#c6c9db;font-weight:400;transform:scaleX(0.9909);-webkit-text-stroke:0.35px #c6c9db;">Users &amp; Teams</div>
<div class="t" style="left:349.77px;top:1393.88px;font-size:30.5px;color:#c6c9db;font-weight:400;transform:scaleX(0.9852);-webkit-text-stroke:0.35px #c6c9db;">Audit Logs</div>
<div class="t" style="left:349.29px;top:1521.88px;font-size:30.5px;color:#c6c9db;font-weight:400;transform:scaleX(1.0317);-webkit-text-stroke:0.35px #c6c9db;">Tenant Settings</div>
<div class="t" style="left:806.66px;top:260.38px;font-size:30.5px;color:#6b7080;font-weight:400;transform:scaleX(1.0427);-webkit-text-stroke:0.3px #6b7080;">Tenant Admin</div>
<div class="t" style="left:1232.80px;top:261.78px;font-size:26.5px;color:#4a8ad8;font-weight:400;transform:scaleX(1.0461);-webkit-text-stroke:0.2px #4a8ad8;">Administration</div>
<div class="t" style="left:1424.60px;top:263.78px;font-size:26.5px;color:#c4c4ca;font-weight:400;transform:scaleX(1.0600);">/</div>
<div class="t" style="left:1448.56px;top:261.78px;font-size:26.5px;color:#4a8ad8;font-weight:400;transform:scaleX(0.9967);-webkit-text-stroke:0.2px #4a8ad8;">Clusters</div>
<div class="t" style="left:1561.90px;top:263.78px;font-size:26.5px;color:#c4c4ca;font-weight:400;transform:scaleX(1.2210);">/</div>
<div class="t" style="left:1587.38px;top:259.60px;font-size:32px;color:#575e72;font-weight:400;transform:scaleX(1.1846);-webkit-text-stroke:0.45px #575e72;">eks-hybrid-cluster</div>
<div class="t" style="left:3678.82px;top:260.38px;font-size:30.5px;color:#3d8ae0;font-weight:400;transform:scaleX(1.0202);-webkit-text-stroke:0.5px #3d8ae0;">Docs</div>
<div class="t" style="left:727.54px;top:364.23px;font-size:29.5px;color:#888d9e;font-weight:400;transform:scaleX(1.0700);-webkit-text-stroke:0.6px #888d9e;">Overview</div>
<div class="t" style="left:922.81px;top:364.23px;font-size:29.5px;color:#888d9e;font-weight:400;transform:scaleX(1.0273);-webkit-text-stroke:0.6px #888d9e;">Usage &amp; Costs</div>
<div class="t" style="left:1186.07px;top:364.23px;font-size:29.5px;color:#888d9e;font-weight:400;transform:scaleX(1.0605);-webkit-text-stroke:0.6px #888d9e;">Profile</div>
<div class="t" style="left:1340.52px;top:364.23px;font-size:29.5px;color:#888d9e;font-weight:400;transform:scaleX(1.0643);-webkit-text-stroke:0.6px #888d9e;">Workloads</div>
<div class="t" style="left:1704.67px;top:364.23px;font-size:29.5px;color:#888d9e;font-weight:400;transform:scaleX(1.0142);-webkit-text-stroke:0.6px #888d9e;">Edge Hosts</div>
<div class="t" style="left:1922.20px;top:364.23px;font-size:29.5px;color:#888d9e;font-weight:400;transform:scaleX(1.0462);-webkit-text-stroke:0.6px #888d9e;">Events</div>
<div class="t" style="left:2080.24px;top:364.23px;font-size:29.5px;color:#888d9e;font-weight:400;transform:scaleX(1.0542);-webkit-text-stroke:0.6px #888d9e;">Scan</div>
<div class="t" style="left:2212.84px;top:364.23px;font-size:29.5px;color:#888d9e;font-weight:400;transform:scaleX(1.0758);-webkit-text-stroke:0.6px #888d9e;">Backups</div>
<div class="t" style="left:1551.39px;top:364.23px;font-size:29.5px;color:#2b6fd5;font-weight:400;transform:scaleX(1.0596);-webkit-text-stroke:1.0px #2b6fd5;">Nodes</div>
<div class="t" style="left:3813.28px;top:363.15px;font-size:29px;color:#45484f;font-weight:400;transform:scaleX(1.1017);-webkit-text-stroke:0.5px #45484f;">Settings</div>
<div class="t" style="left:3121.50px;top:533.38px;font-size:20.5px;color:#737784;font-weight:400;transform:scaleX(0.8585);-webkit-text-stroke:0.4px #737784;letter-spacing:1.5px;">ESTIMATED RATE</div>
<div class="t" style="left:3305.26px;top:525.47px;font-size:34.5px;color:#363a40;font-weight:400;transform:scaleX(1.0213);-webkit-text-stroke:0.5px #363a40;">$0.0884 / hour</div>
<div class="t" style="left:3721.73px;top:529.80px;font-size:30px;color:#ffffff;font-weight:400;transform:scaleX(1.0394);-webkit-text-stroke:0.9px #ffffff;">New Node Pool</div>
<div class="t" style="left:802.19px;top:628.25px;font-size:33px;color:#4d4e55;font-weight:400;transform:scaleX(1.1679);-webkit-text-stroke:1.0px #4d4e55;">worker-pool-t3-medium</div>
<div class="t" style="left:799.94px;top:674.55px;font-size:25px;color:#70737d;font-weight:400;transform:scaleX(1.1156);-webkit-text-stroke:0.45px #70737d;">Cloud</div>
<div class="t" style="left:1244.60px;top:650.20px;font-size:28px;color:#8d9098;font-weight:400;transform:scaleX(0.9572);-webkit-text-stroke:0.2px #8d9098;">Instance Type:</div>
<div class="t" style="left:1434.81px;top:648.45px;font-size:31px;color:#3f4249;font-weight:400;transform:scaleX(1.0354);-webkit-text-stroke:0.4px #3f4249;">t3.medium</div>
<div class="t" style="left:1664.10px;top:650.20px;font-size:28px;color:#8d9098;font-weight:400;transform:scaleX(0.9816);-webkit-text-stroke:0.2px #8d9098;">Architecture:</div>
<div class="t" style="left:1833.19px;top:649.08px;font-size:30.5px;color:#3f4249;font-weight:400;transform:scaleX(0.9473);-webkit-text-stroke:0.4px #3f4249;">AMD64</div>
<div class="t" style="left:743.37px;top:752.29px;font-size:25.3px;color:#8a8f9f;font-weight:400;transform:scaleX(1.0574);-webkit-text-stroke:0.5px #8a8f9f;">Node Name</div>
<div class="t" style="left:1243.42px;top:752.29px;font-size:25.3px;color:#8a8f9f;font-weight:400;transform:scaleX(1.0758);-webkit-text-stroke:0.5px #8a8f9f;">Status</div>
<div class="t" style="left:1624.06px;top:752.29px;font-size:25.3px;color:#8a8f9f;font-weight:400;transform:scaleX(1.1248);-webkit-text-stroke:0.5px #8a8f9f;">Health</div>
<div class="t" style="left:2006.57px;top:752.29px;font-size:25.3px;color:#8a8f9f;font-weight:400;transform:scaleX(1.0612);-webkit-text-stroke:0.5px #8a8f9f;">K8s Version</div>
<div class="t" style="left:2392.27px;top:752.29px;font-size:25.3px;color:#8a8f9f;font-weight:400;transform:scaleX(1.0721);-webkit-text-stroke:0.5px #8a8f9f;">Age</div>
<div class="t" style="left:2774.97px;top:752.29px;font-size:25.3px;color:#8a8f9f;font-weight:400;transform:scaleX(1.0768);-webkit-text-stroke:0.5px #8a8f9f;">Availability Zone</div>
<div class="t" style="left:3157.45px;top:752.29px;font-size:25.3px;color:#8a8f9f;font-weight:400;transform:scaleX(1.0238);-webkit-text-stroke:0.5px #8a8f9f;">Subnet ID</div>
<div class="t" style="left:3540.23px;top:752.29px;font-size:25.3px;color:#8a8f9f;font-weight:400;transform:scaleX(0.9241);-webkit-text-stroke:0.5px #8a8f9f;">VPC ID</div>
<div class="t" style="left:743.33px;top:852.88px;font-size:30.5px;color:#5a5e6f;font-weight:400;transform:scaleX(1.0345);-webkit-text-stroke:0.2px #5a5e6f;">i-08ed59320e68dfc7a</div>
<div class="t" style="left:1258.15px;top:854.35px;font-size:27px;color:#44a566;font-weight:400;transform:scaleX(1.0369);-webkit-text-stroke:0.45px #44a566;">Running</div>
<div class="t" style="left:2006.66px;top:852.88px;font-size:30.5px;color:#5a5e6f;font-weight:400;transform:scaleX(0.9628);-webkit-text-stroke:0.2px #5a5e6f;">1.30.4-eks-a737599</div>
<div class="t" style="left:2391.07px;top:852.88px;font-size:30.5px;color:#5a5e6f;font-weight:400;transform:scaleX(1.0934);-webkit-text-stroke:0.2px #5a5e6f;">a month</div>
<div class="t" style="left:2772.84px;top:852.88px;font-size:30.5px;color:#5a5e6f;font-weight:400;transform:scaleX(1.0288);-webkit-text-stroke:0.2px #5a5e6f;">us-east-1a</div>
<div class="t" style="left:743.34px;top:962.88px;font-size:30.5px;color:#5a5e6f;font-weight:400;transform:scaleX(1.0281);-webkit-text-stroke:0.2px #5a5e6f;">i-0be4ab9b33673023f</div>
<div class="t" style="left:1258.15px;top:964.35px;font-size:27px;color:#44a566;font-weight:400;transform:scaleX(1.0369);-webkit-text-stroke:0.45px #44a566;">Running</div>
<div class="t" style="left:2006.66px;top:962.88px;font-size:30.5px;color:#5a5e6f;font-weight:400;transform:scaleX(0.9628);-webkit-text-stroke:0.2px #5a5e6f;">1.30.4-eks-a737599</div>
<div class="t" style="left:2391.07px;top:962.88px;font-size:30.5px;color:#5a5e6f;font-weight:400;transform:scaleX(1.0934);-webkit-text-stroke:0.2px #5a5e6f;">a month</div>
<div class="t" style="left:2772.82px;top:962.88px;font-size:30.5px;color:#5a5e6f;font-weight:400;transform:scaleX(1.0393);-webkit-text-stroke:0.2px #5a5e6f;">us-east-1b</div>
<div class="t" style="left:798.72px;top:1068.25px;font-size:33px;color:#4d4e55;font-weight:400;transform:scaleX(1.1362);-webkit-text-stroke:1.0px #4d4e55;">hybrid-pool-1</div>
<div class="t" style="left:799.08px;top:1115.05px;font-size:25px;color:#70737d;font-weight:400;transform:scaleX(1.1106);-webkit-text-stroke:0.45px #70737d;">Hybrid</div>
<div class="t" style="left:3510.56px;top:1090.17px;font-size:26.5px;color:#44a566;font-weight:400;transform:scaleX(1.0512);-webkit-text-stroke:0.45px #44a566;">Running</div>
<div class="t" style="left:3692.54px;top:1090.50px;font-size:28px;color:#4e5158;font-weight:400;transform:scaleX(1.1007);-webkit-text-stroke:0.45px #4e5158;">Edit</div>
<div class="t" style="left:3840.33px;top:1090.08px;font-size:28.5px;color:#e0525c;font-weight:400;transform:scaleX(1.1497);-webkit-text-stroke:0.5px #e0525c;">Delete</div>
<div class="t" style="left:743.37px;top:1192.79px;font-size:25.3px;color:#8a8f9f;font-weight:400;transform:scaleX(1.0574);-webkit-text-stroke:0.5px #8a8f9f;">Node Name</div>
<div class="t" style="left:1242.92px;top:1192.79px;font-size:25.3px;color:#8a8f9f;font-weight:400;transform:scaleX(1.0758);-webkit-text-stroke:0.5px #8a8f9f;">Status</div>
<div class="t" style="left:1777.06px;top:1192.79px;font-size:25.3px;color:#8a8f9f;font-weight:400;transform:scaleX(1.1248);-webkit-text-stroke:0.5px #8a8f9f;">Health</div>
<div class="t" style="left:2314.20px;top:1192.79px;font-size:25.3px;color:#8a8f9f;font-weight:400;transform:scaleX(1.0445);-webkit-text-stroke:0.5px #8a8f9f;">K8s Version</div>
<div class="t" style="left:2851.77px;top:1192.79px;font-size:25.3px;color:#8a8f9f;font-weight:400;transform:scaleX(1.0721);-webkit-text-stroke:0.5px #8a8f9f;">Age</div>
<div class="t" style="left:3384.26px;top:1192.79px;font-size:25.3px;color:#8a8f9f;font-weight:400;transform:scaleX(1.0059);-webkit-text-stroke:0.5px #8a8f9f;">Node IPs</div>
<div class="t" style="left:743.62px;top:1293.38px;font-size:30.5px;color:#5a5e6f;font-weight:400;transform:scaleX(1.0303);-webkit-text-stroke:0.2px #5a5e6f;">edge-ec2ff08b06d03c6758d3...</div>
<div class="t" style="left:1257.95px;top:1294.85px;font-size:27px;color:#44a566;font-weight:400;transform:scaleX(1.0369);-webkit-text-stroke:0.45px #44a566;">Running</div>
<div class="t" style="left:2314.22px;top:1293.38px;font-size:30.5px;color:#5a5e6f;font-weight:400;transform:scaleX(0.9878);-webkit-text-stroke:0.2px #5a5e6f;">1.29.0-eks-5e0fdde</div>
<div class="t" style="left:2849.27px;top:1293.38px;font-size:30.5px;color:#5a5e6f;font-weight:400;transform:scaleX(0.9600);-webkit-text-stroke:0.2px #5a5e6f;">14 days</div>
<div class="t" style="left:743.64px;top:1403.38px;font-size:30.5px;color:#5a5e6f;font-weight:400;transform:scaleX(1.0035);-webkit-text-stroke:0.2px #5a5e6f;">edge-ec21c9b7aef1dc5ebd5c...</div>
<div class="t" style="left:1257.95px;top:1404.85px;font-size:27px;color:#44a566;font-weight:400;transform:scaleX(1.0369);-webkit-text-stroke:0.45px #44a566;">Running</div>
<div class="t" style="left:2314.22px;top:1403.38px;font-size:30.5px;color:#5a5e6f;font-weight:400;transform:scaleX(0.9878);-webkit-text-stroke:0.2px #5a5e6f;">1.29.0-eks-5e0fdde</div>
<div class="t" style="left:2850.11px;top:1403.38px;font-size:30.5px;color:#5a5e6f;font-weight:400;transform:scaleX(1.0436);-webkit-text-stroke:0.2px #5a5e6f;">8 days</div>
<div class="t" style="left:743.64px;top:1512.97px;font-size:30.5px;color:#5a5e6f;font-weight:400;transform:scaleX(1.0032);-webkit-text-stroke:0.2px #5a5e6f;">edge-ec2e1fcd1cf8bea9d72ca...</div>
<div class="t" style="left:1257.95px;top:1514.45px;font-size:27px;color:#44a566;font-weight:400;transform:scaleX(1.0369);-webkit-text-stroke:0.45px #44a566;">Running</div>
<div class="t" style="left:2314.22px;top:1512.97px;font-size:30.5px;color:#5a5e6f;font-weight:400;transform:scaleX(0.9878);-webkit-text-stroke:0.2px #5a5e6f;">1.29.0-eks-5e0fdde</div>
<div class="t" style="left:2850.11px;top:1512.97px;font-size:30.5px;color:#5a5e6f;font-weight:400;transform:scaleX(1.0436);-webkit-text-stroke:0.2px #5a5e6f;">8 days</div>
</div></div>
</body></html>
